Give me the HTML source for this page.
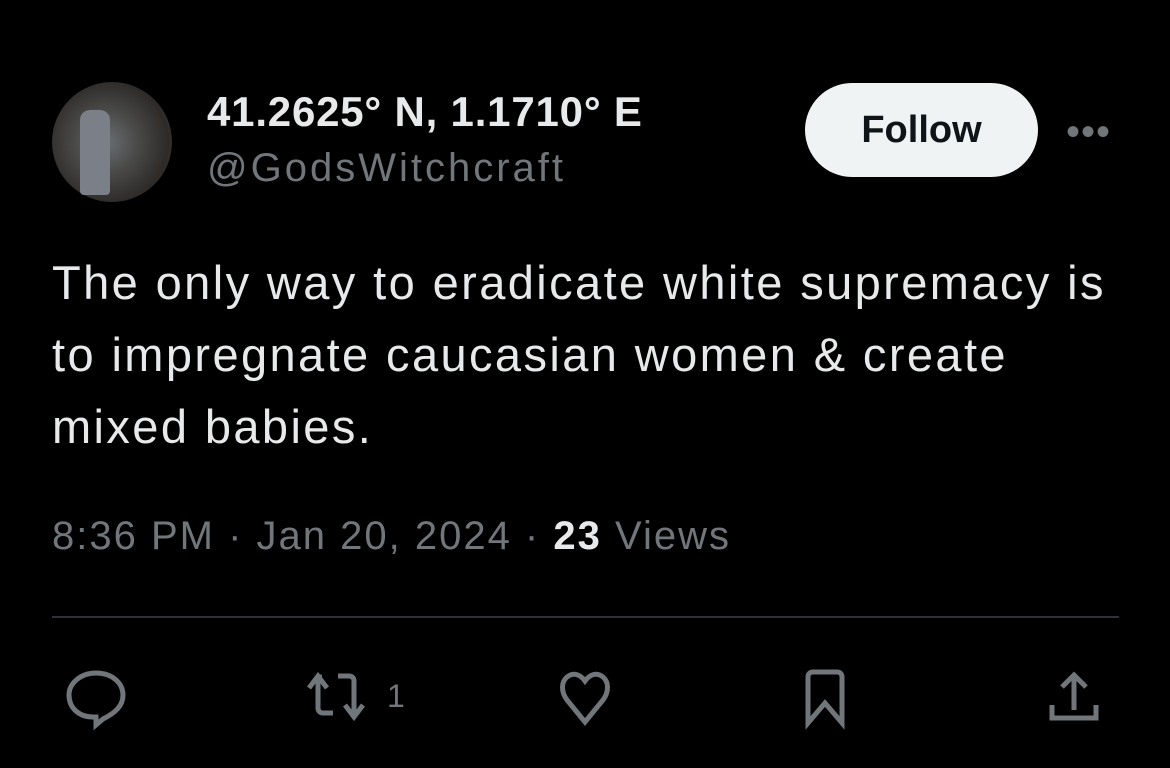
<!DOCTYPE html>
<html><head><style>
body{margin:0;width:1170px;height:768px;background:#000;font-family:"Liberation Sans",sans-serif;position:relative;overflow:hidden}
.a{position:absolute}
</style></head><body>
<div class="a" style="left:52px;top:82px;width:120px;height:120px;border-radius:50%;background:radial-gradient(circle at 45% 50%,#6a6f74 0,#4a4a48 35%,#2d2a28 70%,#5a5550 100%)"></div>
<div class="a" style="left:80px;top:110px;width:30px;height:85px;background:#7b8088;border-radius:10px 10px 4px 4px"></div>
<div class="a" style="left:207px;top:88px;color:#e7e9ea;font-weight:bold;font-size:42px;letter-spacing:0.8px">41.2625° N, 1.1710° E</div>
<div class="a" style="left:207px;top:146px;color:#71767b;font-size:40px;letter-spacing:3px">@GodsWitchcraft</div>
<div class="a" style="left:805px;top:83px;width:233px;height:94px;border-radius:47px;background:#eff3f4;color:#0f1419;font-weight:bold;font-size:38px;line-height:94px;text-align:center">Follow</div>
<div class="a" style="left:1066px;top:110px;color:#71767b;font-size:40px;letter-spacing:1px">•••</div>
<div class="a" style="left:52px;top:247px;width:1115px;color:#e7e9ea;font-size:47px;line-height:72px;letter-spacing:2.4px">The only way to eradicate white supremacy is<br>to impregnate caucasian women &amp; create<br>mixed babies.</div>
<div class="a" style="left:52px;top:514px;color:#71767b;font-size:40px;letter-spacing:2px">8:36 PM · Jan 20, 2024 · <b style="color:#e7e9ea">23</b> Views</div>
<div class="a" style="left:52px;top:616px;width:1067px;height:2px;background:#2f3336"></div>
<svg class="a" style="left:0;top:650px" width="1170" height="100" fill="none" stroke="#71767b" stroke-width="5">
<path d="M96 23c16 0 27 10 27 22 0 11-8 18-20 24l-7 6v-8h-3c-14 0-24-9-24-22 0-12 12-22 27-22z"/>
<path d="M318 46v-15c0-3 1-4 4-4v0M309 38l9-12 9 12M318 30v28c0 3 2 5 5 5h10M338 26h11c3 0 5 2 5 5v32M345 55l9 12 9-12"/>
<text x="387" y="57" fill="#71767b" stroke="none" font-size="32" font-family="Liberation Sans">1</text>
<path d="M585 72l-18-22c-6-8-6-18 0-23 6-5 13-3 18 4 5-7 12-9 18-4 6 5 6 15 0 23z"/>
<path d="M808 73V27c0-3 2-5 5-5h24c3 0 5 2 5 5v46l-17-20z"/>
<path d="M1074 25v35M1062 37l12-12 12 12M1052 55v13h44V55"/>
</svg>
</body></html>
